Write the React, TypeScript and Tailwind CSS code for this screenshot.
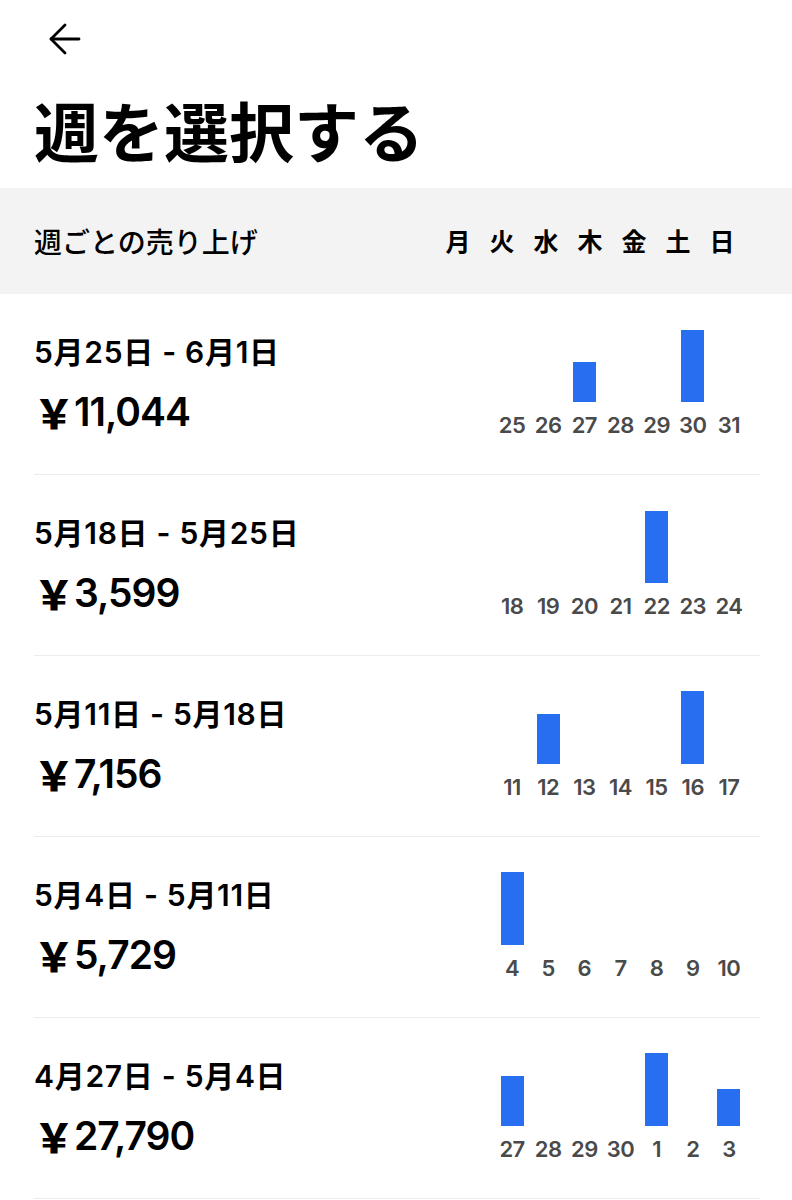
import { ArrowLeft } from "lucide-react"

type Week = {
  range: string
  total: string
  days: string[]
  bars: number[]
}

const WEEKDAYS = ["月", "火", "水", "木", "金", "土", "日"]

const WEEKS: Week[] = [
  {
    range: "5月25日 - 6月1日",
    total: "11,044",
    days: ["25", "26", "27", "28", "29", "30", "31"],
    bars: [0, 0, 40, 0, 0, 72, 0],
  },
  {
    range: "5月18日 - 5月25日",
    total: "3,599",
    days: ["18", "19", "20", "21", "22", "23", "24"],
    bars: [0, 0, 0, 0, 72, 0, 0],
  },
  {
    range: "5月11日 - 5月18日",
    total: "7,156",
    days: ["11", "12", "13", "14", "15", "16", "17"],
    bars: [0, 50, 0, 0, 0, 73, 0],
  },
  {
    range: "5月4日 - 5月11日",
    total: "5,729",
    days: ["4", "5", "6", "7", "8", "9", "10"],
    bars: [73, 0, 0, 0, 0, 0, 0],
  },
  {
    range: "4月27日 - 5月4日",
    total: "27,790",
    days: ["27", "28", "29", "30", "1", "2", "3"],
    bars: [50, 0, 0, 0, 73, 0, 37],
  },
]

const font = "font-['Inter','Noto_Sans_CJK_JP',sans-serif]"

const WeekRow = ({ week }: { week: Week }) => {
  return (
    <div className="flex h-[181px] justify-between border-b border-[#ececec]">
      <div className="flex flex-col pt-[42px]">
        <div className="text-[30px] font-semibold leading-[32px] tracking-[0.7px] text-black">{week.range}</div>
        <div className="mt-[20px] flex items-center leading-[48px] text-black">
          <span className="font-['Noto_Sans_CJK_JP',sans-serif] text-[40px] font-black">￥</span>
          <span className="text-[39px] font-semibold tracking-[-1px]">{week.total}</span>
        </div>
      </div>
      <div className="mr-[13px] flex w-[253px] flex-col">
        <div className="grid h-[108px] grid-cols-7 items-end">
          {week.bars.map((h, i) => (
            <div key={i} className="flex justify-center">
              {h > 0 && <div className="w-[23px] bg-[#276ef1]" style={{ height: h }} />}
            </div>
          ))}
        </div>
        <div className="mt-[8px] grid grid-cols-7 text-[22px] font-semibold leading-[30px] text-[#4a4a4a]">
          {week.days.map((d) => (
            <div key={d} className="text-center tracking-[-0.5px]">
              {d}
            </div>
          ))}
        </div>
      </div>
    </div>
  )
}

export default function App() {
  return (
    <div className={`h-[1200px] w-[792px] overflow-hidden bg-white ${font}`}>
      <div className="pl-[41px] pt-[15px]">
        <ArrowLeft size={48} strokeWidth={1.4} color="#000" />
      </div>
      <h1 className="mt-[34px] pl-[34px] font-['Noto_Sans_CJK_JP',sans-serif] text-[65px] font-bold leading-[64px] text-black">
        週を選択する
      </h1>

      <div className="mt-[27px] flex h-[106px] items-center justify-between bg-[#f3f3f3] pl-[34px] pr-[48px]">
        <div className="font-['Noto_Sans_CJK_JP',sans-serif] text-[28px] font-medium text-black">週ごとの売り上げ</div>
        <div className="flex">
          {WEEKDAYS.map((d) => (
            <div key={d} className="w-[44px] text-center font-['Noto_Sans_CJK_JP',sans-serif] text-[25px] font-bold text-black">
              {d}
            </div>
          ))}
        </div>
      </div>

      <div className="ml-[34px] mr-[32px]">
        {WEEKS.map((w) => (
          <WeekRow key={w.range} week={w} />
        ))}
      </div>
    </div>
  )
}
